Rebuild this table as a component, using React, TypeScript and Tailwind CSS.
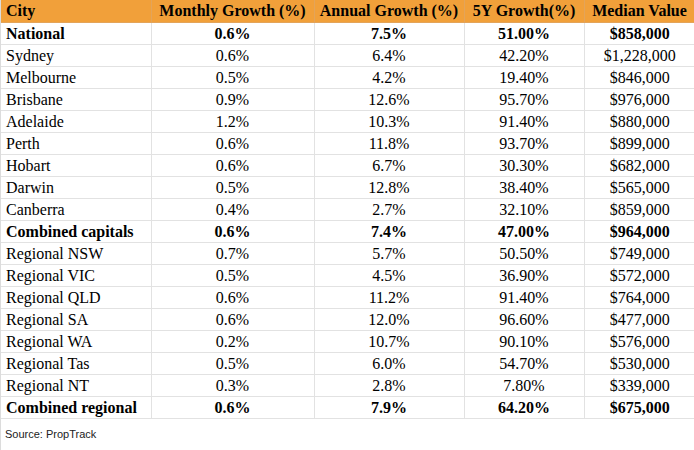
import React from "react";

type Row = [string, string, string, string, string, boolean?];

const rows: Row[] = [
  ["National", "0.6%", "7.5%", "51.00%", "$858,000", true],
  ["Sydney", "0.6%", "6.4%", "42.20%", "$1,228,000"],
  ["Melbourne", "0.5%", "4.2%", "19.40%", "$846,000"],
  ["Brisbane", "0.9%", "12.6%", "95.70%", "$976,000"],
  ["Adelaide", "1.2%", "10.3%", "91.40%", "$880,000"],
  ["Perth", "0.6%", "11.8%", "93.70%", "$899,000"],
  ["Hobart", "0.6%", "6.7%", "30.30%", "$682,000"],
  ["Darwin", "0.5%", "12.8%", "38.40%", "$565,000"],
  ["Canberra", "0.4%", "2.7%", "32.10%", "$859,000"],
  ["Combined capitals", "0.6%", "7.4%", "47.00%", "$964,000", true],
  ["Regional NSW", "0.7%", "5.7%", "50.50%", "$749,000"],
  ["Regional VIC", "0.5%", "4.5%", "36.90%", "$572,000"],
  ["Regional QLD", "0.6%", "11.2%", "91.40%", "$764,000"],
  ["Regional SA", "0.6%", "12.0%", "96.60%", "$477,000"],
  ["Regional WA", "0.2%", "10.7%", "90.10%", "$576,000"],
  ["Regional Tas", "0.5%", "6.0%", "54.70%", "$530,000"],
  ["Regional NT", "0.3%", "2.8%", "7.80%", "$339,000"],
  ["Combined regional", "0.6%", "7.9%", "64.20%", "$675,000", true],
];

const headers = ["City", "Monthly Growth (%)", "Annual Growth (%)", "5Y Growth(%)", "Median Value"];

export default function App() {
  return (
    <div className="w-[694px] h-[450px] bg-white border-l border-[#dcdcdc] overflow-hidden">
      <table
        className="table-fixed border-collapse w-[694px] text-[16px] text-black"
        style={{ fontFamily: '"Liberation Serif", "Times New Roman", serif' }}
      >
        <colgroup>
          <col className="w-[150px]" />
          <col className="w-[163px]" />
          <col className="w-[150px]" />
          <col className="w-[120px]" />
          <col className="w-[111px]" />
        </colgroup>
        <thead>
          <tr className="h-[22px] bg-[#f1a03a]">
            {headers.map((h, i) => (
              <th
                key={h}
                className={`p-0 font-bold leading-[21px] border-b border-r border-[#e3a45a] whitespace-nowrap ${
                  i === 0 ? "text-left pl-[5px]" : "text-center"
                }`}
              >
                {h}
              </th>
            ))}
          </tr>
        </thead>
        <tbody>
          {rows.map((r) => (
            <tr key={r[0]} className={`h-[22px] ${r[5] ? "font-bold" : "font-normal"}`}>
              {r.slice(0, 5).map((c, i) => (
                <td
                  key={i}
                  className={`p-0 leading-[21px] border-b border-r border-[#e2e2e2] whitespace-nowrap ${
                    i === 0 ? "text-left pl-[5px]" : "text-center"
                  } ${i === 4 ? "border-r-0" : ""}`}
                >
                  {c as string}
                </td>
              ))}
            </tr>
          ))}
        </tbody>
      </table>
      <div
        className="pl-[4px] pt-[7px] text-[11px] text-[#222]"
        style={{ fontFamily: '"Liberation Sans", Arial, sans-serif' }}
      >
        Source: PropTrack
      </div>
    </div>
  );
}
